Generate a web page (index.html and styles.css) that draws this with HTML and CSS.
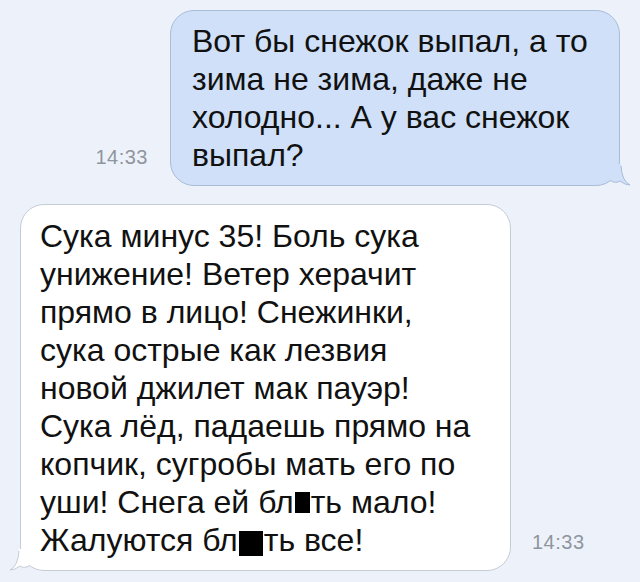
FILE: index.html
```html
<!DOCTYPE html>
<html lang="ru">
<head>
<meta charset="utf-8">
<link rel="stylesheet" href="styles.css">
</head>
<body>
<div class="chat">
  <div class="row out">
    <span class="time">14:33</span>
    <div class="bubble blue">
      <p class="text">Вот бы снежок выпал, а то<br>зима не зима, даже не<br>холодно... А у вас снежок<br>выпал?</p>
      <svg class="tail tail-right" width="20" height="22" viewBox="0 0 20 22"><path d="M0 0 L0 16 Q6 20 10 17 Q15 21 20 21 Q12 17 11 0 Z" fill="#cfe0f8"/><path d="M10 17 Q15 21 20 21 Q12 17 11 2" fill="none" stroke="#a9bcd8" stroke-width="1"/><path d="M0 16.5 Q6 20 10 17" fill="none" stroke="#a9bcd8" stroke-width="1"/></svg>
    </div>
  </div>
  <div class="row in">
    <div class="bubble white">
      <p class="text">Сука минус 35! Боль сука<br>унижение! Ветер херачит<br>прямо в лицо! Снежинки,<br>сука острые как лезвия<br>новой джилет мак пауэр!<br>Сука лёд, падаешь прямо на<br>копчик, сугробы мать его по<br>уши! Снега ей бл<span class="cens c1"></span>ть мало!<br>Жалуются бл<span class="cens c2"></span>ть все!</p>
      <svg class="tail tail-left" width="20" height="22" viewBox="0 0 20 22"><path d="M20 0 L20 16 Q14 20 10 17 Q5 21 0 21 Q8 17 9 0 Z" fill="#ffffff"/><path d="M10 17 Q5 21 0 21 Q8 17 9 2" fill="none" stroke="#c6ccd6" stroke-width="1"/><path d="M20 16.5 Q14 20 10 17" fill="none" stroke="#c6ccd6" stroke-width="1"/></svg>
    </div>
    <span class="time">14:33</span>
  </div>
</div>
</body>
</html>
```
FILE: styles.css
```css
html, body {
  margin: 0;
  padding: 0;
}
body {
  background: #edf2fa;
  width: 640px;
  height: 582px;
  overflow: hidden;
  font-family: "Liberation Sans", Arial, sans-serif;
  color: #111;
}
.chat {
  display: flex;
  flex-direction: column;
  gap: 18px;
  padding-top: 10px;
}
.row {
  display: flex;
  align-items: flex-end;
}
.row.out {
  justify-content: flex-end;
  padding-right: 20px;
}
.row.in {
  padding-left: 20px;
}
.time {
  font-size: 20px;
  color: #8f959e;
  letter-spacing: 0.5px;
}
.row.out .time {
  margin-right: 22px;
  margin-bottom: 17px;
}
.row.in .time {
  margin-left: 21px;
  margin-bottom: 17px;
}
.bubble {
  position: relative;
  border-radius: 24px;
  box-sizing: border-box;
}
.bubble.blue {
  width: 450px;
  background: #cfe0f8;
  border: 1px solid #a9bcd8;
  padding: 11px 18px 11px 21px;
}
.bubble.white {
  width: 491px;
  background: #ffffff;
  border: 1px solid #c6ccd6;
  padding: 12px 18px 11px 19px;
}
.text {
  margin: 0;
  font-size: 32px;
  line-height: 38px;
  white-space: nowrap;
}
.tail {
  position: absolute;
  bottom: -1px;
}
.tail-right {
  right: -11px;
}
.tail-left {
  left: -11px;
}
.cens {
  display: inline-block;
  background: #000;
  vertical-align: baseline;
}
.c1 {
  width: 15px;
  height: 21px;
  margin: 0 1px;
}
.c2 {
  width: 24px;
  height: 25px;
  margin: 0 1px;
  vertical-align: -5px;
}
```
